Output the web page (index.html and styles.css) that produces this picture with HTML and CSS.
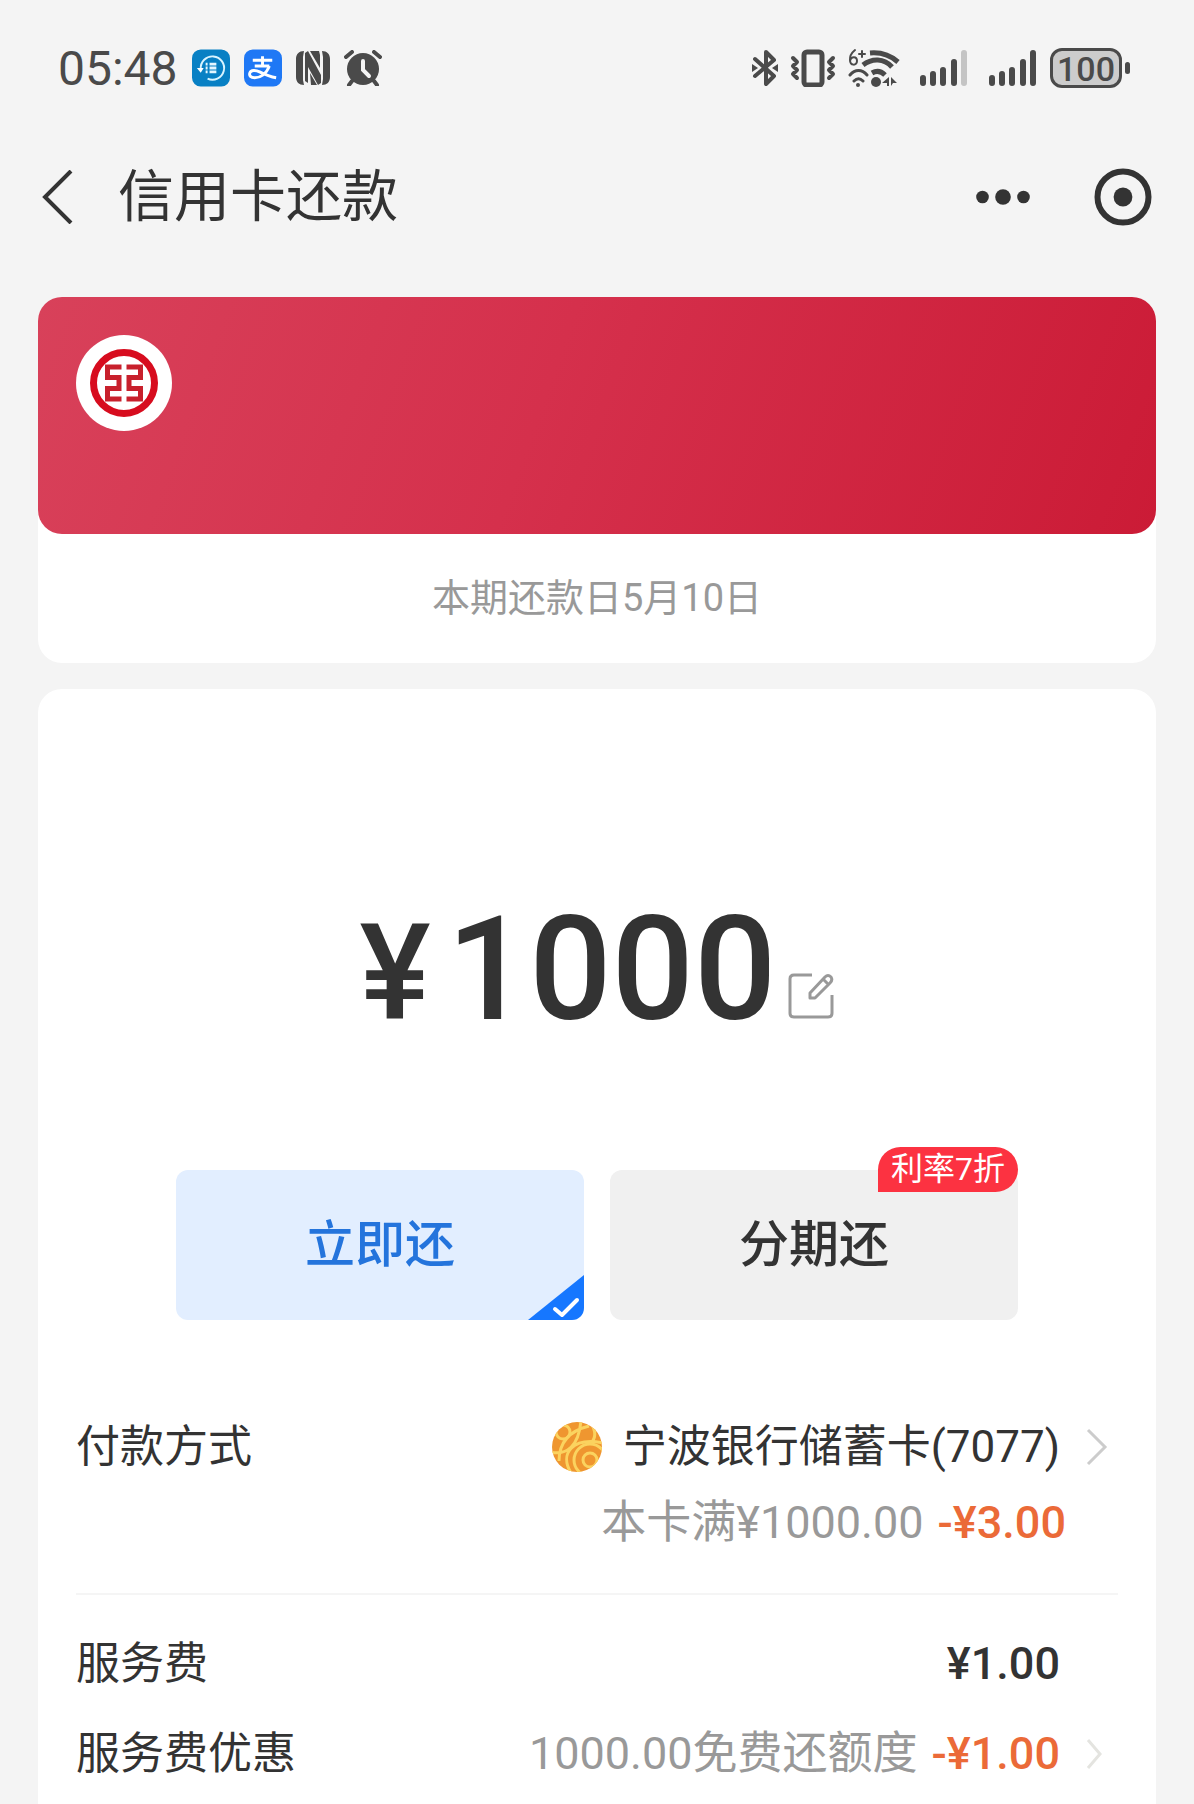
FILE: index.html
```html
<!DOCTYPE html>
<html lang="zh-CN">
<head>
<meta charset="utf-8">
<meta name="viewport" content="width=device-width, initial-scale=1">
<title>信用卡还款</title>
<link rel="stylesheet" href="styles.css">
</head>
<body>
<div class="status">
  <div class="status-left">
    <span class="time">05:48</span>
    <svg width="38" height="38" viewBox="0 0 39 38" fill="none" aria-hidden="true">
      <rect width="39" height="38" rx="9" fill="#0880c4"/>
      <path d="M9 20A12 12 0 1 1 16 30" stroke="#d8f4ff" stroke-width="2"/>
      <path d="M5 19h7l-3 5z" fill="#fff"/>
      <path d="M14 15h2m2 0h7M14 19h2m2 0h7M14 23h2m2 0h7" stroke="#e4f6ff" stroke-width="3"/>
    </svg>
    <svg width="38" height="38" viewBox="0 0 39 38" fill="none" aria-hidden="true">
      <rect width="39" height="38" rx="9" fill="#1f78f5"/>
      <path d="M9 11h20M11 17h15M19 7v10" stroke="#fff" stroke-width="3"/>
      <path d="M26 17c-3 8-9 12-15 12-4 0-6-2-5-5 1-3 6-3 10-1 6 3 11 5 17 6" stroke="#fff" stroke-width="3"/>
    </svg>
    <svg width="34" height="36" viewBox="0 0 34 36" fill="#4a4a4a" aria-hidden="true">
      <path d="M8 1C3 1 0 4 0 9v18c0 5 3 8 8 8L7 30V7zM26 1c5 0 8 3 8 8v18c0 5-3 8-8 8l1-6V7z"/>
      <path d="M9 3l3-2 13 24v8l-3 2-10-18v16l-3-2z"/>
      <path d="M14 1h9l1 4v13zM14 23l7 12h-6z"/>
    </svg>
    <svg width="38" height="36" viewBox="0 0 38 36" fill="none" stroke-linecap="round" aria-hidden="true">
      <circle cx="19" cy="19" r="16" fill="#4a4a4a"/>
      <path d="M2 7l6-5M36 7l-6-5M8 31l-3 4M30 31l3 4" stroke="#4a4a4a" stroke-width="4"/>
      <path d="M19 11v9l6 6" stroke="#f4f4f4" stroke-width="4"/>
    </svg>
  </div>
  <div class="status-right">
    <svg width="26" height="38" viewBox="0 0 26 38" fill="none" stroke="#4a4a4a" stroke-width="4" stroke-linejoin="round" stroke-linecap="round" aria-hidden="true">
      <path d="M3 10l19 17-8 8V3l8 8L3 27"/>
      <path d="M0 15l6 4-6 4zM26 15l-6 4 6 4z" fill="#4a4a4a" stroke="none"/>
    </svg>
    <svg width="46" height="38" viewBox="0 0 46 38" fill="none" stroke="#4a4a4a" stroke-width="5" stroke-linejoin="round" stroke-linecap="round" aria-hidden="true">
      <rect x="14" y="3" width="18" height="33" rx="3"/>
      <path d="M3 9l4 4-4 4 4 4-4 4 4 4M43 9l-4 4 4 4-4 4 4 4-4 4" stroke-width="4"/>
    </svg>
    <svg width="52" height="40" viewBox="0 0 52 40" fill="none" stroke="#4a4a4a" stroke-width="5" stroke-linecap="round" aria-hidden="true">
      <path d="M7 2C2 6 2 9 2 12c0 6 7 6 7 1s-6-5-7 0M14 3v6M11 6h6" stroke-width="2"/>
      <path d="M22 5c11-1 20 2 28 9M15 17c9-7 21-7 29 2M24 25c5-3 9-2 13 2" stroke-linecap="butt"/>
      <path d="M2 27c5-6 12-6 17 0M6 33c3-3 6-3 9 0" stroke-width="3"/>
      <circle cx="10" cy="37" r="2" fill="#4a4a4a" stroke="none"/>
      <circle cx="28" cy="34" r="5" fill="#4a4a4a" stroke="none"/>
      <path d="M34 35l7-6v9h-2v-3zM43 29v9l2-3h4z" fill="#4a4a4a" stroke="none"/>
    </svg>
    <svg width="59" height="38" viewBox="0 0 59 38" fill="none" stroke="#4a4a4a" stroke-width="6" stroke-linecap="round" aria-hidden="true">
      <path d="M11 29v5M21 25v9M31 21v13M42 13v21"/>
      <path d="M52 4v30" stroke="#c4c4c4"/>
    </svg>
    <svg width="55" height="38" viewBox="0 0 55 38" fill="none" stroke="#4a4a4a" stroke-width="6" stroke-linecap="round" aria-hidden="true">
      <path d="M9 29v5M19 25v9M29 21v13M40 13v21M50 4v30"/>
    </svg>
    <span class="battery"><span class="level">100</span></span>
  </div>
</div>

<header class="nav">
  <button class="icon-button back" type="button" aria-label="返回">
    <svg width="32" height="54" viewBox="0 0 32 54" fill="none" stroke="#333" stroke-width="4"><path d="M30 1L4 27l26 26"/></svg>
  </button>
  <h1>信用卡还款</h1>
  <button class="icon-button" type="button" aria-label="更多">
    <svg width="54" height="16" viewBox="0 0 54 16" fill="#333"><circle cx="6.500" cy="8" r="6.300"/><circle cx="27" cy="8" r="7.800"/><circle cx="47.500" cy="8" r="6.300"/></svg>
  </button>
  <button class="icon-button close" type="button" aria-label="关闭">
    <svg width="58" height="58" viewBox="0 0 58 58" fill="none"><circle cx="29" cy="29" r="25.500" stroke="#333" stroke-width="6"/><circle cx="29" cy="29" r="9.400" fill="#333"/></svg>
  </button>
</header>

<main>
  <section class="bill">
    <div class="bank">
      <svg width="96" height="96" viewBox="0 0 96 96" fill="none" role="img" aria-label="中国工商银行">
        <circle cx="48" cy="48" r="48" fill="#fff"/>
        <circle cx="48" cy="48" r="30.500" stroke="#d70c1e" stroke-width="7"/>
        <g stroke="#c8202c" stroke-width="5">
          <path d="M45.500 32H31.500V42.500H43V53.500H31.500V64H45.500"/>
          <path d="M50.500 32H64.500V42.500H53V53.500H64.500V64H50.500"/>
        </g>
      </svg>
    </div>
    <p class="due">本期还款日5月10日</p>
  </section>

  <section class="pay">
    <div class="amount">
      <span class="currency">¥</span><span class="number">1000</span>
      <button class="icon-button" type="button" aria-label="修改金额">
        <svg width="46" height="46" viewBox="0 0 46 46" fill="none" stroke="#999" stroke-width="3" stroke-linejoin="round">
          <path d="M24 2H6Q2 2 2 6V40Q2 44 6 44H40Q44 44 44 40V22"/>
          <path d="M22 25v-5L37 4q3-3 6 0 2 3-1 6L27 25zM35 6l5 5"/>
        </svg>
      </button>
    </div>

    <div class="modes">
      <button class="mode selected" type="button" aria-pressed="true">立即还
        <svg class="tick" width="56" height="45" viewBox="0 0 56 45" fill="none" aria-hidden="true"><path d="M56 0V45H0z" fill="#1677ff"/><path d="M27 34l7 6 15-15" stroke="#fff" stroke-width="4" stroke-linecap="round" stroke-linejoin="round"/></svg>
      </button>
      <button class="mode" type="button" aria-pressed="false">分期还<span class="badge">利率7折</span></button>
    </div>

    <div class="row method">
      <span class="label">付款方式</span>
      <a class="value" href="#method">
        <svg class="bank-icon" width="52" height="52" viewBox="0 0 52 52" fill="none" aria-hidden="true">
          <clipPath id="ball"><circle cx="26" cy="26" r="25"/></clipPath>
          <circle cx="26" cy="26" r="25" fill="#ef9630"/>
          <g clip-path="url(#ball)" stroke="#fbd35f" stroke-width="3">
            <circle cx="39" cy="39" r="7"/><circle cx="39" cy="39" r="16"/><circle cx="12" cy="11" r="7"/>
            <path d="M8 40C8 22 18 10 38 5M-2 31c18 4 30-6 32-32M20 52C8 32 22 16 52 22M40 2c6 10 4 16 0 20"/>
          </g>
        </svg>
        <span class="label">宁波银行储蓄卡(7077)</span>
        <svg class="chevron" width="22" height="38" viewBox="0 0 22 38" fill="none" stroke="#ccc" stroke-width="3"><path d="M2 2l17 17L2 36"/></svg>
      </a>
    </div>
    <p class="offer"><span class="muted">本卡满¥1000.00</span><span class="discount">-¥3.00</span></p>

    <div class="row fee">
      <span class="label">服务费</span>
      <span class="price">¥1.00</span>
    </div>
    <div class="row fee-offer">
      <span class="label">服务费优惠</span>
      <a class="value" href="#offer">
        <span class="muted">1000.00免费还额度</span><span class="discount">-¥1.00</span>
        <svg class="chevron" width="22" height="38" viewBox="0 0 22 38" fill="none" stroke="#e4e4e0" stroke-width="3"><path d="M2 5l12 14L2 33"/></svg>
      </a>
    </div>
  </section>
</main>
</body>
</html>
```

FILE: styles.css
```css
* { box-sizing: border-box; }

body {
  margin: 0;
  min-height: 100vh;
  display: flex;
  flex-direction: column;
  background: #f4f4f4;
  color: #333;
  font-family: Roboto, "Noto Sans CJK SC", sans-serif;
  font-size: 45px;
  line-height: 64px;
}

h1, p { margin: 0; font-weight: 400; }
svg { display: block; flex: none; }
button { font: inherit; color: inherit; border: 0; padding: 0; cursor: pointer; }
a { color: inherit; text-decoration: none; }
.icon-button { background: none; }

/* Status bar */
.status {
  display: flex;
  justify-content: space-between;
  align-items: center;
  height: 136px;
  padding: 0 64px 0 58px;
  color: #4a4a4a;
}
.status-left, .status-right { display: flex; align-items: center; }
.status-left { gap: 14px; }
.status-right { gap: 12px; }
.time { padding-top: 2px; font-size: 48px; }
.battery { display: flex; align-items: center; gap: 3px; }
.battery::after {
  content: "";
  width: 5px;
  height: 12px;
  border-radius: 3px;
  background: #4a4a4a;
}
.level {
  width: 72px;
  height: 40px;
  border: 3px solid #4a4a4a;
  border-radius: 12px;
  background: #ccc;
  font-size: 34px;
  font-weight: 500;
  line-height: 36px;
  text-align: center;
}

/* Title bar */
.nav {
  display: flex;
  align-items: center;
  height: 122px;
  margin-bottom: 39px;
  padding: 0 42px 0 41px;
}
.nav h1 {
  flex: 1;
  margin-left: 45px;
  font-size: 56px;
  line-height: 80px;
}
.close { margin-left: 64px; }

main {
  flex: 1;
  display: flex;
  flex-direction: column;
  gap: 26px;
  padding: 0 38px;
}

/* Bill card */
.bill { border-radius: 24px; background: #fff; }
.bank {
  height: 237px;
  padding: 38px;
  border-radius: 24px;
  background: linear-gradient(110deg, #d8415a 0%, #d5304c 45%, #cb1b36 100%);
}
.due {
  padding: 32px 0 33px;
  color: #999;
  font-size: 38px;
  text-align: center;
}

/* Payment card */
.pay {
  flex: 1;
  padding: 200px 38px 0;
  border-radius: 24px 24px 0 0;
  background: #fff;
}
.amount {
  display: flex;
  justify-content: center;
  align-items: baseline;
  font-weight: 500;
  line-height: 160px;
}
.currency { margin-right: 16px; font-size: 134px; }
.number { margin-right: 12px; font-size: 145px; }

.modes {
  display: flex;
  gap: 26px;
  margin: 116px 100px 95px;
}
.mode {
  position: relative;
  flex: 1;
  height: 150px;
  border-radius: 12px;
  background: #f0f0f0;
  font-size: 50px;
  font-weight: 500;
}
.selected { background: #e2eeff; color: #2474dc; overflow: hidden; }
.tick { position: absolute; right: 0; bottom: 0; }
.badge {
  position: absolute;
  top: -23px;
  right: 0;
  padding: 0 13px;
  border-radius: 23px 23px 23px 0;
  background: #fc3241;
  color: #fff;
  font-size: 32px;
  font-weight: 400;
  line-height: 45px;
}

.row { display: flex; justify-content: space-between; align-items: center; }
.label { font-size: 44px; }
.value { display: flex; align-items: center; }
.bank-icon { margin-right: 20px; }
.chevron { margin: 0 10px 0 26px; }
.muted { color: #999; }
.discount { margin-left: 14px; color: #eb6a38; font-weight: 500; }
.offer {
  display: flex;
  justify-content: flex-end;
  padding: 12px 52px 38px 0;
  border-bottom: 2px solid #f5f5f5;
}
.fee { padding: 37px 58px 26px 0; }
.price { font-weight: 500; }
```
